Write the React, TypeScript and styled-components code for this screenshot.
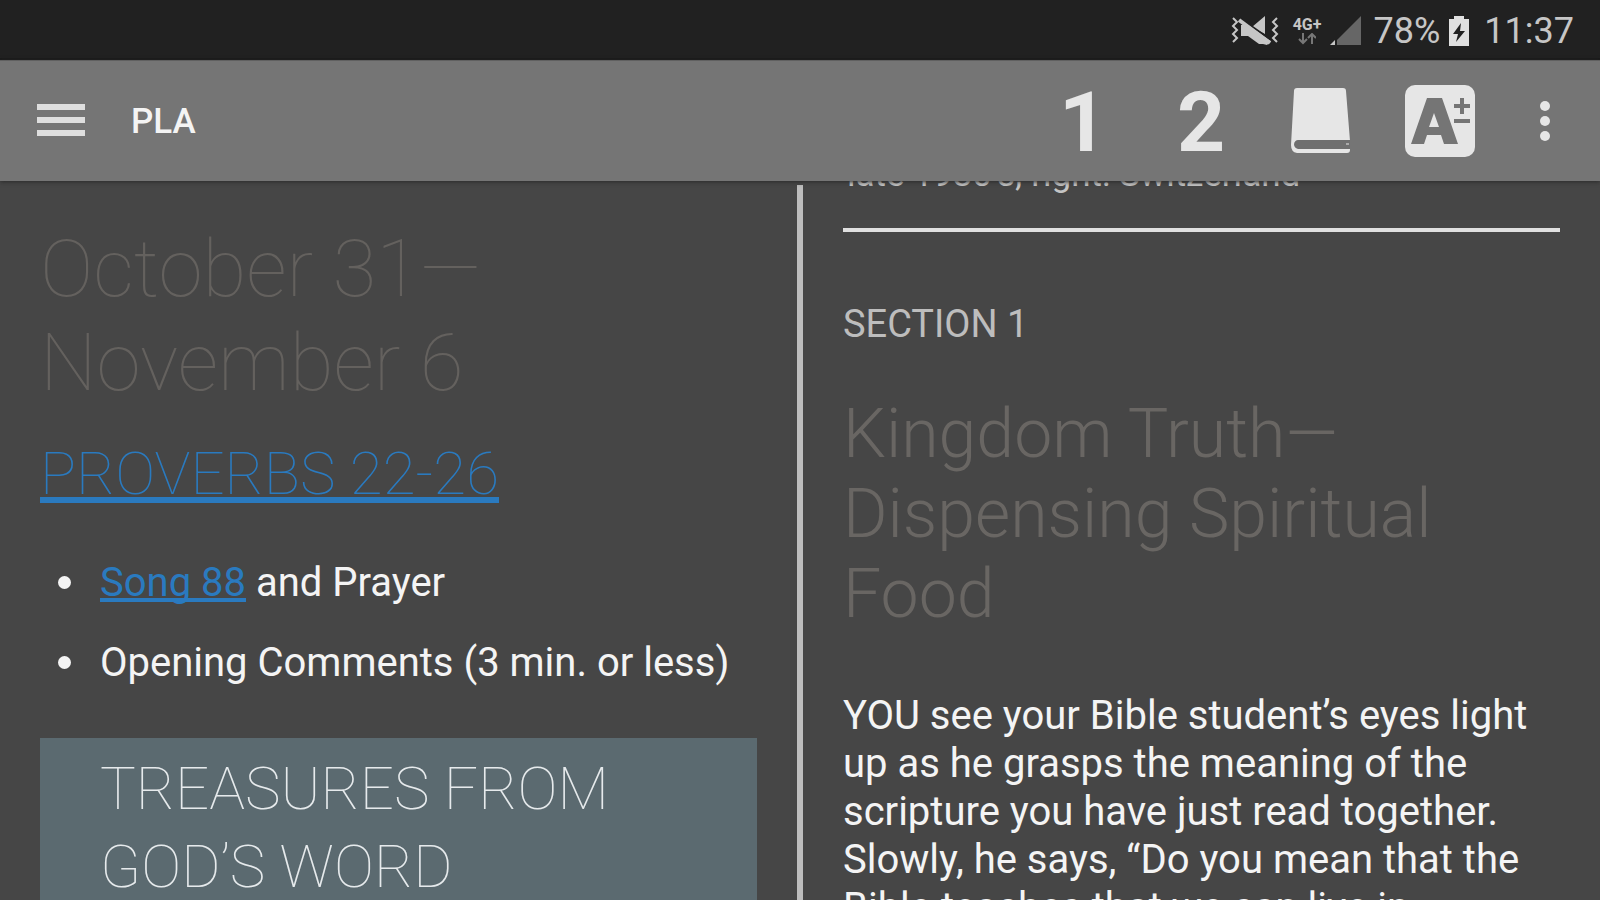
import React from "react";
import styled, { createGlobalStyle } from "styled-components";

const GlobalStyle = createGlobalStyle`
  *, *::before, *::after { box-sizing: border-box; }
  html, body, #root { height: 100%; }
  body {
    margin: 0;
    background: #464646;
    color: #f4f4f4;
    font-family: Roboto, "Liberation Sans", sans-serif;
    overflow: hidden;
  }
`;

const Page = styled.div`
  display: flex;
  flex-direction: column;
  height: 100vh;
`;

const StatusBar = styled.div`
  flex: none;
  display: flex;
  align-items: center;
  justify-content: flex-end;
  height: 60px;
  padding-right: 26px;
  padding-top: 4px;
  background: #212121;
  border-bottom: 2px solid #1a1a1a;
  color: #c6c6c6;
  font-size: 36px;
  line-height: 40px;
`;

const StatusText = styled.span<{ $gap: number }>`
  margin-left: ${(p) => p.$gap}px;
`;

const StatusIcon = styled.svg<{ $gap: number }>`
  flex: none;
  margin-left: ${(p) => p.$gap}px;
`;

const Network = styled.span`
  display: flex;
  flex-direction: column;
  align-items: center;
  margin-left: 14px;
  font-size: 16px;
  font-weight: 700;
  line-height: 16px;
`;

const Toolbar = styled.header`
  flex: none;
  display: flex;
  align-items: center;
  height: 121px;
  padding: 0 32px 0 37px;
  background: #757575;
  border-top: 1px solid #606060;
  box-shadow: 0 1px 4px #2a2a2a;
  z-index: 1;
`;

const Tools = styled.div`
  display: flex;
  align-items: center;
  margin-right: 22px;
`;

const ToolButton = styled.button<{ $width: number }>`
  flex: none;
  display: flex;
  align-items: center;
  justify-content: center;
  width: ${(p) => p.$width}px;
  height: 96px;
  padding: 0;
  border: 0;
  background: none;
  color: #e6e6e6;
  cursor: pointer;
`;

const NumberButton = styled(ToolButton)`
  padding-top: 4px;
  font: 700 84px/88px Roboto, "Liberation Sans", sans-serif;
`;

const Title = styled.h1`
  flex: 1;
  margin: 0 0 0 46px;
  padding-top: 2px;
  color: #f4f4f4;
  font-size: 35px;
  font-weight: 500;
  line-height: 48px;
`;

const Panes = styled.main`
  flex: 1;
  display: grid;
  grid-template-columns: 1fr 6px 1fr;
  min-height: 0;
`;

const Pane = styled.section`
  min-width: 0;
  padding: 0 40px;
  overflow: hidden;
`;

const Divider = styled.div`
  margin-top: 4px;
  background: #bdbdbd;
`;

const Week = styled.h2`
  margin: 41px 0 0;
  color: #64615e;
  font-size: 80px;
  font-weight: 100;
  line-height: 94px;
`;

const Reading = styled.h3`
  margin: 26px 0 0;
  font-size: 60px;
  font-weight: 100;
  line-height: 76px;
`;

const Link = styled.a`
  color: #2a7abf;
  text-decoration: underline;
  text-decoration-skip-ink: none;
`;

const Items = styled.ul`
  display: flex;
  flex-direction: column;
  gap: 32px;
  margin: 47px 0 0;
  padding: 0;
  list-style: none;
  font-size: 40px;
  line-height: 48px;
`;

const Item = styled.li`
  display: flex;
  padding-left: 18px;

  &::before {
    content: "";
    flex: none;
    width: 13px;
    height: 13px;
    margin: 17px 29px 0 0;
    border-radius: 50%;
    background: #f4f4f4;
  }
`;

const Banner = styled.h2`
  margin: 51px 0 0;
  padding: 12px 60px;
  background: #5b6a70;
  color: #e6eaec;
  font-size: 60px;
  font-weight: 100;
  line-height: 78px;
`;

const Caption = styled.p`
  margin: -28px 0 0;
  padding-left: 4px;
  color: #c4c4c4;
  font-size: 35px;
  line-height: 44px;
`;

const Rule = styled.hr`
  height: 4px;
  margin: 31px 0 0;
  border: 0;
  background: #e0e0e0;
`;

const SectionLabel = styled.p`
  margin: 68px 0 0;
  color: #bdbdbd;
  font-size: 38px;
  line-height: 48px;
`;

const Chapter = styled.h2`
  margin: 46px 0 0;
  color: #696663;
  font-size: 68px;
  font-weight: 300;
  line-height: 80px;
`;

const Body = styled.p`
  margin: 58px 0 0;
  font-size: 40px;
  line-height: 48px;
`;

export default function App() {
  return (
    <Page>
      <GlobalStyle />
      <StatusBar>
        <StatusIcon $gap={0} width="48" height="32" viewBox="0 0 48 32" fill="none" stroke="#c6c6c6">
          <path d="M2 3l4 4-4 4 4 4-4 4 4 4-4 4M46 3l-4 4 4 4-4 4 4 4-4 4 4 4" strokeWidth="2" />
          <path d="M21 12L34 1v18zM10 10h8l22 16-4 4-4-1-4 0-11-8h-7z" fill="#c6c6c6" stroke="none" />
          <path d="M9 3l31 22" stroke="#212121" strokeWidth="2" />
          <path d="M8 5l31 23" strokeWidth="4" />
        </StatusIcon>
        <Network>
          4G+
          <svg width="18" height="12" viewBox="0 0 18 12" fill="none" stroke="#777" strokeWidth="2">
            <path d="M5 0v9M1 6l4 4 4-4M14 11V2M10 5l4-4 4 4" />
          </svg>
        </Network>
        <StatusIcon $gap={8} width="32" height="32" viewBox="0 0 32 32">
          <path d="M31 1v29H7V25z" fill="#666" />
          <path d="M5 25v5H0z" fill="#c6c6c6" />
        </StatusIcon>
        <StatusText $gap={12}>78%</StatusText>
        <StatusIcon $gap={8} width="22" height="32" viewBox="0 0 22 32">
          <path d="M6 1h10v3h5v27H1V4h5z" fill="#e0e0e0" />
          <path d="M13 8L5 19h5l-2 8 9-11h-5z" fill="#212121" />
        </StatusIcon>
        <StatusText $gap={14}>11:37</StatusText>
      </StatusBar>

      <Toolbar>
        <ToolButton $width={48} aria-label="Menu">
          <svg width="48" height="34" viewBox="0 0 48 34" fill="#dedede">
            <path d="M0 0h48v6H0zM0 13h48v6H0zM0 26h48v6H0z" />
          </svg>
        </ToolButton>
        <Title>PLA</Title>
        <Tools>
          <NumberButton $width={118}>1</NumberButton>
          <NumberButton $width={118}>2</NumberButton>
          <ToolButton $width={120} aria-label="Publications">
            <svg width="60" height="68" viewBox="0 0 60 68">
              <path d="M7 1h46q3 0 3 3l4 50v9q0 3-3 3H7q-6-1-6-8L4 4q0-3 3-3z" fill="#e6e6e6" />
              <path d="M8 53h52v9H8q-4-1-4-5 1-4 4-4z" fill="#6f6f6f" />
              <path d="M56 57h3" stroke="#aaa" strokeWidth="2" />
            </svg>
          </ToolButton>
          <ToolButton $width={120} aria-label="Text size">
            <svg width="72" height="74" viewBox="0 0 72 74">
              <rect x="1" y="1" width="70" height="72" rx="10" fill="#e6e6e6" />
              <path fillRule="evenodd" d="M23 14h15l16 46H40l-3-9H23l-3 9H7zM30 29l-5 14h10z" fill="#757575" />
              <path d="M50 22h16M58 14v16M50 37h16" stroke="#757575" strokeWidth="4" />
            </svg>
          </ToolButton>
        </Tools>
        <ToolButton $width={46} aria-label="More options">
          <svg width="12" height="42" viewBox="0 0 12 42" fill="#e6e6e6">
            <circle cx="6" cy="6" r="5" />
            <circle cx="6" cy="21" r="5" />
            <circle cx="6" cy="36" r="5" />
          </svg>
        </ToolButton>
      </Toolbar>

      <Panes>
        <Pane>
          <Week>October 31—<br />November 6</Week>
          <Reading><Link href="#proverbs">PROVERBS 22-26</Link></Reading>
          <Items>
            <Item><span><Link href="#song">Song 88</Link> and Prayer</span></Item>
            <Item><span>Opening Comments (3 min. or less)</span></Item>
          </Items>
          <Banner>TREASURES FROM<br />GOD’S WORD</Banner>
        </Pane>
        <Divider />
        <Pane>
          <Caption>late 1980’s; right: Switzerland</Caption>
          <Rule />
          <SectionLabel>SECTION 1</SectionLabel>
          <Chapter>Kingdom Truth—Dispensing Spiritual Food</Chapter>
          <Body>
            YOU see your Bible student’s eyes light up as he grasps the meaning of the scripture you
            have just read together. Slowly, he says, “Do you mean that the Bible teaches that we can
            live in
          </Body>
        </Pane>
      </Panes>
    </Page>
  );
}
